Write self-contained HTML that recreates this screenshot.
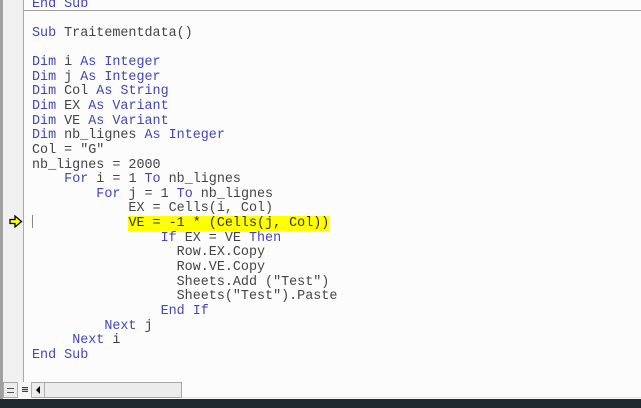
<!DOCTYPE html>
<html><head><style>
body{margin:0;width:641px;height:408px;background:#fcfcfc;position:relative;overflow:hidden;font-family:"Liberation Mono",monospace;}
.lb{position:absolute;left:0;top:0;width:3px;height:399px;background:#a0a0a0;}
.gut{position:absolute;left:3px;top:0;width:20px;height:382px;background:#f0f0f0;border-right:1px solid #a8a8a8;}
.sep{position:absolute;left:24px;right:0;top:10px;height:1px;background:#a0a0a0;}
.code{position:absolute;left:32px;top:-2.5px;font-size:13.4px;line-height:14.64px;white-space:pre;color:#444;}
.k{color:#4545b5;}
.hl{background:#ffff00;color:#333;}
.cur{position:absolute;left:32px;top:215px;width:1px;height:13px;background:#888;}
.sb{position:absolute;left:3px;top:382px;width:179px;height:16px;background:#ececec;border:1px solid #a8a8a8;box-sizing:border-box;}
.btn{position:absolute;top:382px;height:16px;border-right:1px solid #b0b0b0;box-sizing:border-box;}
.dark{position:absolute;left:0;top:399px;width:641px;height:9px;background:#1e2930;}
.bl{position:absolute;left:182px;right:0;top:397px;height:1px;background:#e0e0e0;}
</style></head><body>
<div class="lb"></div>
<div class="gut"></div>
<div class="sep"></div>
<div class="code"><span class="k">End Sub</span>

<span class="k">Sub</span> Traitementdata()

<span class="k">Dim</span> i <span class="k">As Integer</span>
<span class="k">Dim</span> j <span class="k">As Integer</span>
<span class="k">Dim</span> Col <span class="k">As String</span>
<span class="k">Dim</span> EX <span class="k">As Variant</span>
<span class="k">Dim</span> VE <span class="k">As Variant</span>
<span class="k">Dim</span> nb_lignes <span class="k">As Integer</span>
Col = "G"
nb_lignes = 2000
    <span class="k">For</span> i = 1 <span class="k">To</span> nb_lignes
        <span class="k">For</span> j = 1 <span class="k">To</span> nb_lignes
            EX = Cells(i, Col)
            <span class="hl">VE = -1 * (Cells(j, Col))</span>
                <span class="k">If</span> EX = VE <span class="k">Then</span>
                  Row.EX.Copy
                  Row.VE.Copy
                  Sheets.Add ("Test")
                  Sheets("Test").Paste
                <span class="k">End If</span>
         <span class="k">Next</span> j
     <span class="k">Next</span> i
<span class="k">End Sub</span></div>
<div class="cur"></div>
<svg style="position:absolute;left:9px;top:215px" width="14" height="13" viewBox="0 0 14 13"><path d="M1 4.5H6V1L12.5 6.5 6 12V8.5H1Z" fill="#ffff00" stroke="#000" stroke-width="1.3"/></svg>
<div class="sb"></div>
<div class="btn" style="left:3px;width:15px;"><div style="position:absolute;left:4px;top:6px;width:7px;height:3px;border-top:1px solid #555;border-bottom:1px solid #555;"></div></div>
<div class="btn" style="left:18px;width:14px;background:#f6f6f6;"><div style="position:absolute;left:4px;top:5px;width:6px;height:5px;background:repeating-linear-gradient(#444 0 1px,#ccc 1px 2px);"></div></div>
<div class="btn" style="left:32px;width:13px;"><div style="position:absolute;left:4px;top:4px;width:0;height:0;border-top:4px solid transparent;border-bottom:4px solid transparent;border-right:4px solid #000;"></div></div>
<div class="bl"></div>
<div class="dark"></div>
</body></html>
